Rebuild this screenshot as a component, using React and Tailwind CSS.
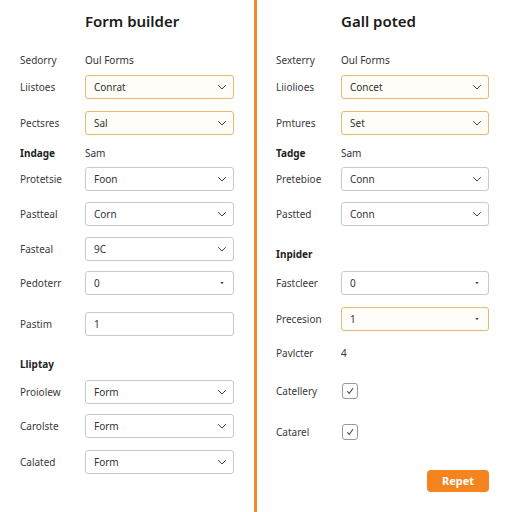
import React from 'react';

const Chevron = () => (
  <svg width="10" height="10" viewBox="0 0 10 10" className="shrink-0">
    <path d="M1.5 3.5 L5 7 L8.5 3.5" fill="none" stroke="#444" strokeWidth="1" strokeLinecap="round" strokeLinejoin="round" />
  </svg>
);

const Caret = () => (
  <svg width="8" height="8" viewBox="0 0 8 8" className="shrink-0 mr-[1px]">
    <path d="M2.3 3 L5.7 3 L4 5.2 Z" fill="#444" />
  </svg>
);

const Select = ({ value, accent, icon = 'chevron', plain }) => (
  <div
    className={`flex-1 h-[24px] rounded-[3px] border flex items-center justify-between pl-[8px] pr-[6px] text-[10px] text-[#333] ${
      accent ? 'border-[#e6b870] bg-[#fffdf8]' : 'border-[#cacaca] bg-white'
    }`}
  >
    <span>{value}</span>
    {plain ? null : icon === 'caret' ? <Caret /> : <Chevron />}
  </div>
);

const Checkbox = () => (
  <div className="w-[16px] h-[16px] ml-[1px] rounded-[3px] border border-[#999] flex items-center justify-center">
    <svg width="10" height="10" viewBox="0 0 10 10">
      <path d="M2.5 5.5 L4.2 7.5 L7.8 2.5" fill="none" stroke="#444" strokeWidth="1.1" strokeLinecap="round" strokeLinejoin="round" />
    </svg>
  </div>
);

const Row = ({ row }) => {
  const { label, bold, text, select, accent, icon, input, check, mt } = row;
  return (
    <div className={`flex items-center h-[24px] ${mt}`}>
      <div className={`w-[65px] shrink-0 text-[10px] ${bold ? 'font-bold text-[#222]' : 'text-[#3a3a3a]'}`}>{label}</div>
      {text !== undefined && <div className="text-[10px] text-[#333]">{text}</div>}
      {select !== undefined && <Select value={select} accent={accent} icon={icon} />}
      {input !== undefined && <Select value={input} plain />}
      {check && <Checkbox />}
    </div>
  );
};

const leftRows = [
  { label: 'Sedorry', text: 'Oul Forms', mt: 'mt-0' },
  { label: 'Liistoes', select: 'Conrat', accent: true, mt: 'mt-[3px]' },
  { label: 'Pectsres', select: 'Sal', accent: true, mt: 'mt-[12px]' },
  { label: 'Indage', bold: true, text: 'Sam', mt: 'mt-[6px]' },
  { label: 'Protetsie', select: 'Foon', mt: 'mt-[2px]' },
  { label: 'Pastteal', select: 'Corn', mt: 'mt-[11px]' },
  { label: 'Fasteal', select: '9C', mt: 'mt-[11px]' },
  { label: 'Pedoterr', select: '0', icon: 'caret', mt: 'mt-[10px]' },
  { label: 'Pastim', input: '1', mt: 'mt-[17px]' },
  { label: 'Lliptay', bold: true, mt: 'mt-[16px]' },
  { label: 'Proiolew', select: 'Form', mt: 'mt-[4px]' },
  { label: 'Carolste', select: 'Form', mt: 'mt-[10px]' },
  { label: 'Calated', select: 'Form', mt: 'mt-[12px]' },
];

const rightRows = [
  { label: 'Sexterry', text: 'Oul Forms', mt: 'mt-0' },
  { label: 'Liiolioes', select: 'Concet', accent: true, mt: 'mt-[3px]' },
  { label: 'Pmtures', select: 'Set', accent: true, mt: 'mt-[12px]' },
  { label: 'Tadge', bold: true, text: 'Sam', mt: 'mt-[6px]' },
  { label: 'Pretebioe', select: 'Conn', mt: 'mt-[2px]' },
  { label: 'Pastted', select: 'Conn', mt: 'mt-[11px]' },
  { label: 'Inpider', bold: true, mt: 'mt-[16px]' },
  { label: 'Fastcleer', select: '0', icon: 'caret', mt: 'mt-[5px]' },
  { label: 'Precesion', select: '1', icon: 'caret', accent: true, mt: 'mt-[12px]' },
  { label: 'Pavlcter', text: '4', mt: 'mt-[10px]' },
  { label: 'Catellery', check: true, mt: 'mt-[14px]' },
  { label: 'Catarel', check: true, mt: 'mt-[17px]' },
];

const Panel = ({ title, rows, children, className }) => (
  <div className={`flex flex-col ${className}`}>
    <div className="h-[48px] pl-[65px] pt-[12px] text-[15px] font-semibold text-[#1a1a1a] leading-[18px]">{title}</div>
    {rows.map((r, i) => (
      <Row key={i} row={r} />
    ))}
    {children}
  </div>
);

export default function App() {
  return (
    <div
      className="w-[512px] h-[512px] bg-white flex overflow-hidden"
      style={{ fontFamily: '"Noto Sans", "Open Sans", sans-serif' }}
    >
      <Panel title="Form builder" rows={leftRows} className="w-[254px] pl-[20px] pr-[20px]" />
      <div className="w-[3px] h-full bg-[#f08a24]" />
      <Panel title="Gall poted" rows={rightRows} className="flex-1 pl-[19px] pr-[23px]">
        <div className="flex justify-end mt-[26px]">
          <button className="w-[62px] h-[22px] rounded-[4px] bg-[#f5841f] text-white text-[11px] font-bold">Repet</button>
        </div>
      </Panel>
    </div>
  );
}
